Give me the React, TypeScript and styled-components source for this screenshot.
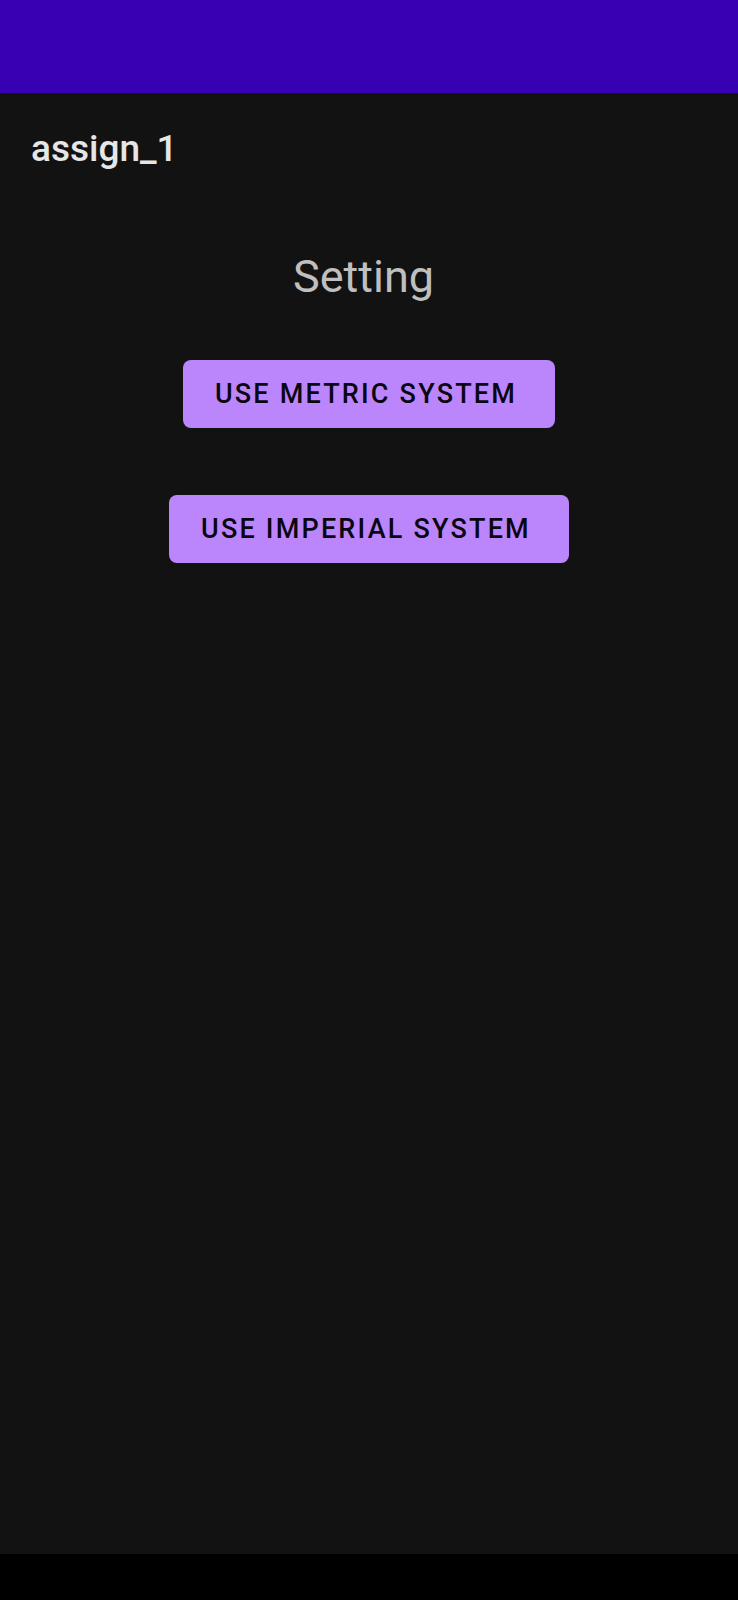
import styled, { createGlobalStyle } from 'styled-components'

const GlobalStyle = createGlobalStyle`
  html, body {
    margin: 0;
    padding: 0;
    background: #121212;
  }
  * {
    box-sizing: border-box;
  }
`

const Page = styled.div`
  display: flex;
  flex-direction: column;
  min-height: 100vh;
  background: #121212;
  font-family: Roboto, "Liberation Sans", sans-serif;
`

const StatusBar = styled.div`
  height: 93px;
  background: #3700b3;
`

const Toolbar = styled.header`
  display: flex;
  align-items: center;
  height: 110px;
  padding-left: 31px;
`

const ToolbarTitle = styled.h1`
  margin: 0;
  font-size: 37px;
  font-weight: 500;
  color: #e6e6e6;
`

const Content = styled.main`
  flex: 1;
  display: flex;
  flex-direction: column;
  align-items: center;
`

const Heading = styled.h2`
  margin: 51px 11px 0 0;
  font-size: 45px;
  line-height: 1;
  font-weight: 400;
  color: #bfbfbf;
`

const ActionButton = styled.button<{ $first?: boolean }>`
  margin-top: ${p => (p.$first ? '61px' : '67px')};
  height: 68px;
  padding: 0 38px 0 32px;
  border: none;
  border-radius: 8px;
  background: #bb86fc;
  color: #0a0612;
  font-family: Roboto, "Liberation Sans", sans-serif;
  font-size: 27px;
  font-weight: 500;
  letter-spacing: 2.2px;
  text-transform: uppercase;
  cursor: pointer;
`

const NavBar = styled.div`
  height: 46px;
  background: #000;
`

export default function App() {
  return (
    <Page>
      <GlobalStyle />
      <StatusBar />
      <Toolbar>
        <ToolbarTitle>assign_1</ToolbarTitle>
      </Toolbar>
      <Content>
        <Heading>Setting</Heading>
        <ActionButton $first>Use Metric System</ActionButton>
        <ActionButton>Use Imperial System</ActionButton>
      </Content>
      <NavBar />
    </Page>
  )
}
